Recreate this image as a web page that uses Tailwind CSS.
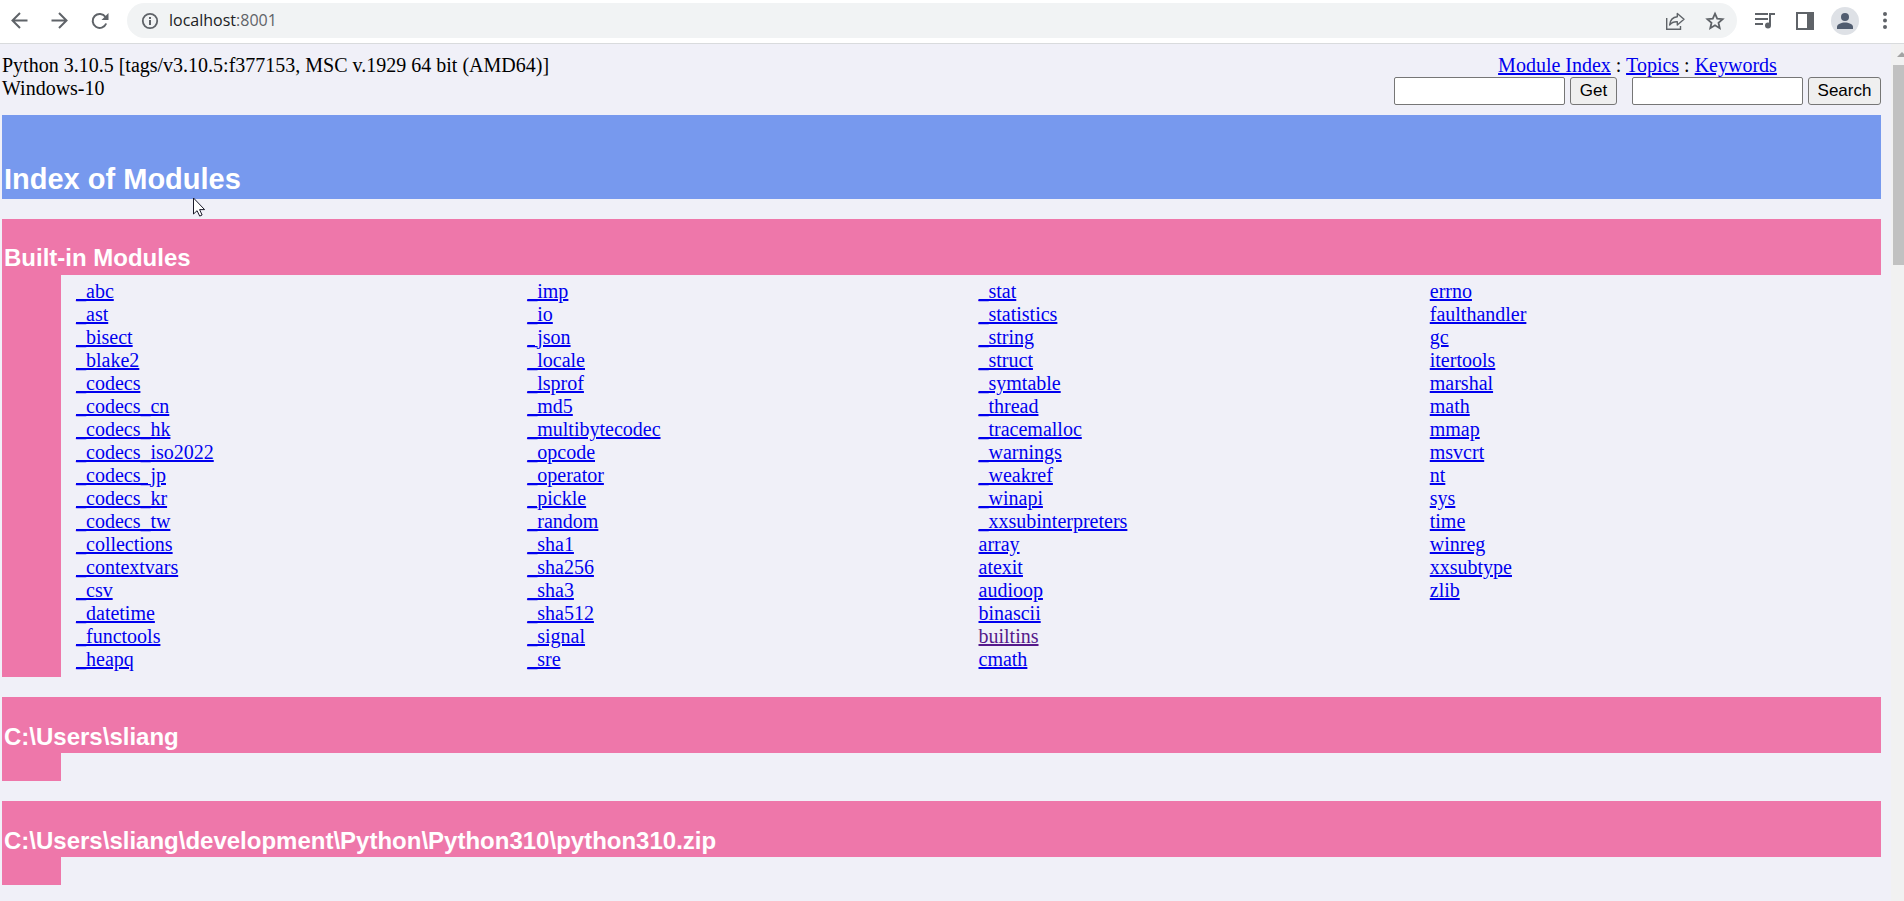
<!DOCTYPE html>
<html lang="en">
<head>
<meta charset="utf-8">
<title>Pydoc: Index of Modules</title>
<script src="https://cdn.jsdelivr.net/npm/@tailwindcss/browser@4"></script>
</head>
<body class="flex h-screen flex-col overflow-hidden bg-[#f0f0f8] font-['Liberation_Serif',serif] text-[20px] leading-[23px] text-black">

<header class="flex h-11 shrink-0 items-center border-b border-[#d9dbdd] bg-white pb-[2px] pl-[10px] pr-[9px] text-[#5f6368]">
  <nav class="flex shrink-0 gap-5" aria-label="Browser navigation">
    <button aria-label="Back" class="size-5"><svg viewBox="0 0 20 20" class="size-5" fill="none" stroke="currentColor" stroke-width="2"><path d="M17.500 9.500H3M10 2L2.500 9.500l7.500 7.500"/></svg></button>
    <button aria-label="Forward" class="size-5"><svg viewBox="0 0 20 20" class="size-5" fill="none" stroke="currentColor" stroke-width="2"><path d="M1.500 9.500H17M9 2L16.500 9.500 9 17"/></svg></button>
    <button aria-label="Reload" class="size-5"><svg viewBox="0 0 20 20" class="size-5" fill="none" stroke="currentColor" stroke-width="2"><path d="M16.200 12.500A7 7 0 1 1 15.500 6"/><path d="M18.500 2v7h-7z" fill="currentColor" stroke="none"/></svg></button>
  </nav>
  <div class="ml-[17px] flex h-[35px] grow items-center rounded-full bg-[#f1f3f4] pl-[14px] pr-3">
    <svg viewBox="0 0 18 18" class="size-[18px]" fill="none" stroke="currentColor" stroke-width="2"><circle cx="9" cy="9" r="7.200" stroke-width="1.800"/><path d="M9 8v5M9 5v2"/></svg>
    <p class="ml-[10px] grow font-['Open_Sans',sans-serif] text-[16px]"><span class="text-[#202124]">localhost</span>:8001</p>
    <button aria-label="Share" class="mr-5 size-5"><svg viewBox="0 0 20 20" class="size-5" fill="none" stroke="currentColor" stroke-width="1.400"><path d="M1.700 7v11.300H15.500V15"/><path d="M12.300 2.500L19 8.300l-6.700 5.700v-3.200c-3.300-.2-5.800.8-7.700 3.200.5-4.800 3-7.700 7.700-8.200z" stroke-linejoin="round"/></svg></button>
    <button aria-label="Bookmark" class="size-5"><svg viewBox="0 0 20 20" class="size-5" fill="none" stroke="currentColor" stroke-width="1.800"><path d="M10 2.700l2.200 5 5.400.5-4.100 3.600 1.200 5.400-4.700-2.900-4.700 2.900 1.200-5.400-4.100-3.600 5.400-.5z"/></svg></button>
  </div>
  <div class="ml-[18px] flex shrink-0 items-center">
    <button aria-label="Media controls" class="size-5"><svg viewBox="0 0 20 20" class="size-5" fill="currentColor"><path d="M0 2h13v2H0zM0 7h13v2H0zM0 12h8v2H0zM14 2h6v2h-4v10h-2z"/><circle cx="13" cy="14.500" r="3"/></svg></button>
    <button aria-label="Side panel" class="ml-[21px] size-[18px]"><svg viewBox="0 0 18 18" class="size-[18px]"><path fill="currentColor" fill-rule="evenodd" d="M0 0h18v18H0zM2 2v14h9V2z"/></svg></button>
    <button aria-label="Profile" class="ml-[17px] flex size-7 items-center justify-center rounded-full bg-[#dee1e6] text-[#515d70]"><svg viewBox="0 0 16 16" class="size-4" fill="currentColor"><circle cx="8" cy="4" r="4"/><path d="M0 16v-2c0-3 4.500-4.500 8-4.500s8 1.500 8 4.500v2z"/></svg></button>
    <button aria-label="Menu" class="ml-4 size-5"><svg viewBox="0 0 20 20" class="size-5" fill="currentColor"><circle cx="10" cy="3" r="2"/><circle cx="10" cy="9.500" r="2"/><circle cx="10" cy="16" r="2"/></svg></button>
  </div>
</header>

<div class="flex min-h-0 grow">
  <main class="min-w-0 grow pl-[2px] pr-[10px] pt-[10px]">
    <div class="flex items-start justify-between">
      <p>Python 3.10.5 [tags/v3.10.5:f377153, MSC v.1929 64 bit (AMD64)]<br>Windows-10</p>
      <div>
        <p class="text-center"><a href="#index" class="text-[#0000ee] underline decoration-2">Module Index</a> : <a href="#topics" class="text-[#0000ee] underline decoration-2">Topics</a> : <a href="#keywords" class="text-[#0000ee] underline decoration-2">Keywords</a></p>
        <div class="flex gap-[15px] font-['Liberation_Sans',sans-serif] text-[17px]">
          <form class="flex gap-[5px]">
            <input type="text" aria-label="Get" class="h-7 w-[171px] rounded-[2px] border border-[#767676] bg-white px-1">
            <button type="button" class="h-7 w-[47px] rounded-[3px] border border-[#767676] bg-[#efefef] leading-[24px]">Get</button>
          </form>
          <form class="flex gap-[5px]">
            <input type="text" aria-label="Search" class="h-7 w-[171px] rounded-[2px] border border-[#767676] bg-white px-1">
            <button type="button" class="h-7 w-[73px] rounded-[3px] border border-[#767676] bg-[#efefef] leading-[24px]">Search</button>
          </form>
        </div>
      </div>
    </div>

    <h1 id="index" class="mt-[10px] bg-[#7799ee] px-[2px] pb-[2px] pt-[46px] font-['Liberation_Sans',sans-serif] text-[29px] font-bold leading-[36px] text-white">Index of Modules</h1>

    <section class="mt-5">
      <h2 class="bg-[#ee77aa] px-[2px] pb-[3px] pt-[25px] font-['Liberation_Sans',sans-serif] text-[24px] font-bold leading-[28px] text-white">Built-in Modules</h2>
      <div class="flex">
        <div class="w-[59px] shrink-0 bg-[#ee77aa]"></div>
        <div id="modules" class="grid grow grid-cols-4 pb-[6px] pl-[15px] pt-[5px]"></div>
      </div>
    </section>

    <section class="mt-5">
      <h2 class="bg-[#ee77aa] px-[2px] pb-[2px] pt-[26px] font-['Liberation_Sans',sans-serif] text-[24px] font-bold leading-[28px] text-white">C:\Users\sliang</h2>
      <div class="h-7 w-[59px] bg-[#ee77aa]"></div>
    </section>

    <section class="mt-5">
      <h2 class="bg-[#ee77aa] px-[2px] pb-[2px] pt-[26px] font-['Liberation_Sans',sans-serif] text-[24px] font-bold leading-[28px] text-white">C:\Users\sliang\development\Python\Python310\python310.zip</h2>
      <div class="h-7 w-[59px] bg-[#ee77aa]"></div>
    </section>
  </main>

  <div class="w-[13px] shrink-0 overflow-hidden bg-[#f1f1f1] pl-[2px]" aria-hidden="true">
    <div class="flex h-[21px] items-center pl-1"><svg viewBox="0 0 10 5" class="h-[5px] w-[10px] shrink-0"><path d="M0 5L5 0l5 5z" fill="#a3a3a3"/></svg></div>
    <div class="h-[200px] bg-[#c1c1c1]"></div>
  </div>
</div>

<svg class="absolute left-[193px] top-[197px] h-5 w-[13px]" viewBox="0 0 13 20" aria-hidden="true"><path d="M.5 1v16l3.600-3.300 2.600 5.400 2.400-1.100-2.500-5.400h5z" fill="#fff" stroke="#1a1a2a" stroke-width="1"/></svg>

<script>
const columns = [
  "_abc _ast _bisect _blake2 _codecs _codecs_cn _codecs_hk _codecs_iso2022 _codecs_jp _codecs_kr _codecs_tw _collections _contextvars _csv _datetime _functools _heapq",
  "_imp _io _json _locale _lsprof _md5 _multibytecodec _opcode _operator _pickle _random _sha1 _sha256 _sha3 _sha512 _signal _sre",
  "_stat _statistics _string _struct _symtable _thread _tracemalloc _warnings _weakref _winapi _xxsubinterpreters array atexit audioop binascii builtins cmath",
  "errno faulthandler gc itertools marshal math mmap msvcrt nt sys time winreg xxsubtype zlib"
];
document.getElementById("modules").innerHTML = columns.map(c => "<ul>" + c.split(" ").map(n =>
  `<li><a href="#${n}" class="underline decoration-2 ${n === "builtins" ? "text-[#551a8b]" : "text-[#0000ee]"}">${n}</a></li>`).join("") + "</ul>").join("");
</script>
</body>
</html>
